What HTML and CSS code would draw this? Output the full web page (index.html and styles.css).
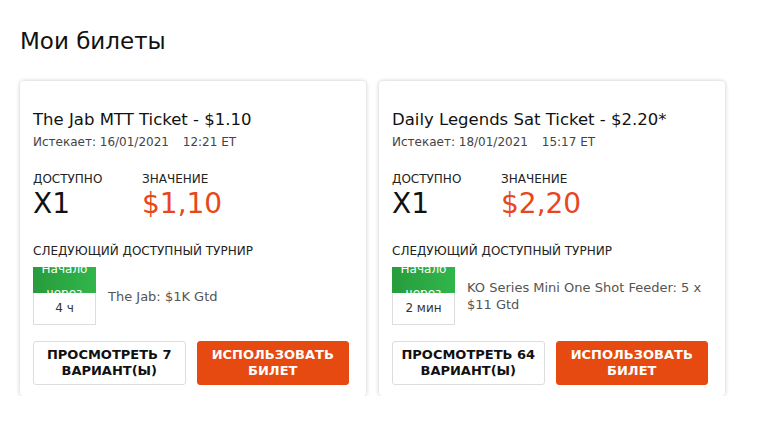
FILE: index.html
```html
<!DOCTYPE html>
<html lang="ru">
<head>
  <meta charset="UTF-8">
  <title>Мои билеты</title>
  <link rel="stylesheet" href="styles.css">
</head>
<body>

<h1 class="page-title">Мои билеты</h1>

<div class="tickets">
  <div class="ticket">
    <div class="ticket-name">The Jab MTT Ticket - $1.10</div>
    <div class="ticket-expiry">Истекает: 16/01/2021 <span class="expiry-time">12:21 ET</span></div>

    <div class="ticket-stats">
      <div class="stat stat-count">
        <div class="stat-label">Доступно</div>
        <div class="stat-value">X1</div>
      </div>
      <div class="stat">
        <div class="stat-label">Значение</div>
        <div class="stat-value stat-money">$1,10</div>
      </div>
    </div>

    <div class="next-label">Следующий доступный турнир</div>
    <div class="next-tourney">
      <div class="starts">
        <div class="starts-head"><span>Начало через</span></div>
        <div class="starts-time">4 ч</div>
      </div>
      <div class="tourney-name">The Jab: $1K Gtd</div>
    </div>

    <div class="ticket-actions">
      <button class="btn btn-light">Просмотреть 7 вариант(ы)</button>
      <button class="btn btn-primary">Использовать билет</button>
    </div>
  </div>

  <div class="ticket">
    <div class="ticket-name">Daily Legends Sat Ticket - $2.20*</div>
    <div class="ticket-expiry">Истекает: 18/01/2021 <span class="expiry-time">15:17 ET</span></div>

    <div class="ticket-stats">
      <div class="stat stat-count">
        <div class="stat-label">Доступно</div>
        <div class="stat-value">X1</div>
      </div>
      <div class="stat">
        <div class="stat-label">Значение</div>
        <div class="stat-value stat-money">$2,20</div>
      </div>
    </div>

    <div class="next-label">Следующий доступный турнир</div>
    <div class="next-tourney">
      <div class="starts">
        <div class="starts-head"><span>Начало через</span></div>
        <div class="starts-time">2 мин</div>
      </div>
      <div class="tourney-name">KO Series Mini One Shot Feeder: 5 x $11 Gtd</div>
    </div>

    <div class="ticket-actions">
      <button class="btn btn-light">Просмотреть 64 вариант(ы)</button>
      <button class="btn btn-primary">Использовать билет</button>
    </div>
  </div>
</div>

</body>
</html>
```

FILE: styles.css
```css
body {
  font-family: "DejaVu Sans", Verdana, sans-serif;
  margin: 0;
  padding: 0 20px;
  color: #111;
  background: #fff;
}
.page-title {
  font-size: 23px;
  font-weight: normal;
  line-height: 28px;
  margin: 27px 0 26px;
}
.tickets {
  display: flex;
  gap: 13px;
}
.ticket {
  width: 346px;
  box-sizing: border-box;
  padding: 29px 17px 11px 13px;
  background: #fff;
  border-radius: 4px;
  box-shadow: 0 0 4px rgba(0, 0, 0, 0.22);
}
.ticket-name {
  font-size: 16.5px;
  line-height: 20px;
}
.ticket-expiry {
  font-size: 12px;
  line-height: 16px;
  margin-top: 4px;
  color: #444;
}
.expiry-time {
  margin-left: 10px;
}
.ticket-stats {
  display: flex;
  margin-top: 21px;
}
.stat-count {
  width: 109px;
}
.stat-label {
  font-size: 12px;
  line-height: 16px;
  text-transform: uppercase;
  color: #222;
}
.stat-value {
  font-size: 28px;
  line-height: 32px;
  margin-top: 1px;
}
.stat-money {
  color: #e8471c;
}
.next-label {
  font-size: 12px;
  line-height: 16px;
  text-transform: uppercase;
  margin-top: 23px;
  color: #222;
}
.next-tourney {
  display: flex;
  align-items: center;
  gap: 12px;
  margin-top: 8px;
}
.starts {
  width: 63px;
  flex-shrink: 0;
  text-align: center;
}
.starts-head {
  height: 26px;
  overflow: hidden;
  background: linear-gradient(90deg, #279c3c, #31b64b);
  color: #fff;
  font-size: 12px;
}
.starts-head span {
  display: block;
  line-height: 24px;
  margin-top: -10px;
}
.starts-time {
  height: 32px;
  box-sizing: border-box;
  border: 1px solid #ddd;
  border-top: none;
  font-size: 12px;
  line-height: 31px;
  color: #333;
}
.tourney-name {
  font-size: 13px;
  line-height: 17px;
  color: #555;
}
.ticket-actions {
  display: flex;
  gap: 11px;
  margin-top: 16px;
}
.btn {
  width: 153px;
  height: 44px;
  box-sizing: border-box;
  padding: 5px 4px;
  font-family: "DejaVu Sans", Verdana, sans-serif;
  font-size: 13px;
  font-weight: bold;
  line-height: 16px;
  text-transform: uppercase;
  border-radius: 3px;
  cursor: pointer;
}
.btn-light {
  background: #fff;
  color: #111;
  border: 1px solid #ddd;
}
.btn-primary {
  background: #e64a10;
  color: #fff;
  border: 1px solid #e64a10;
}
```
